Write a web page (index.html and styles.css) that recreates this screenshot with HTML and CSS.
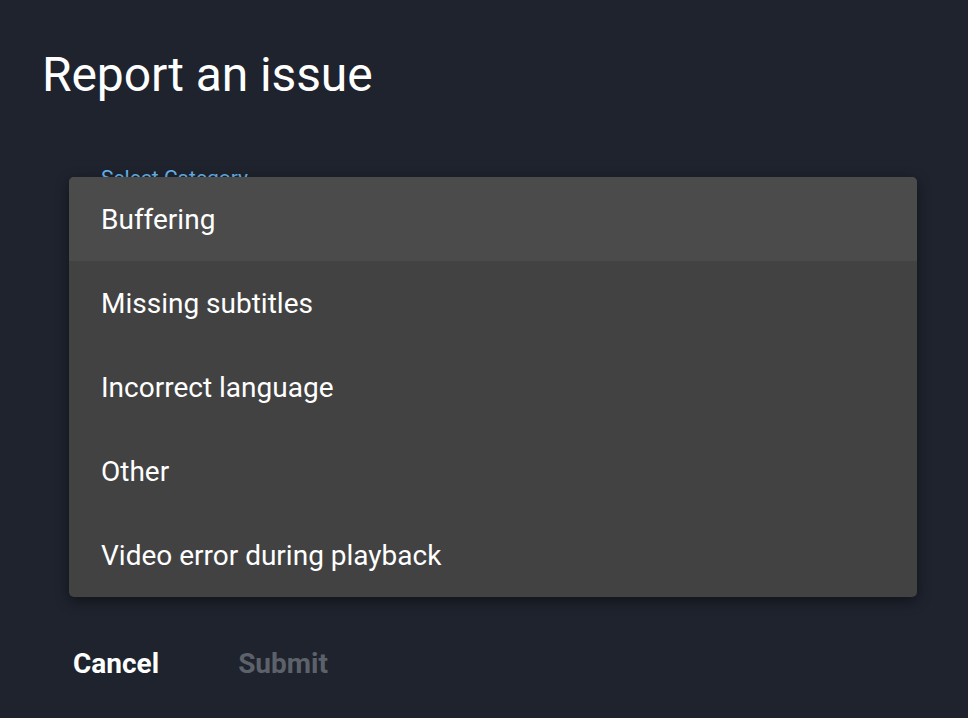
FILE: index.html
```html
<!DOCTYPE html>
<html lang="en">
<head>
  <meta charset="UTF-8">
  <meta name="viewport" content="width=device-width, initial-scale=1.0">
  <title>Report an issue</title>
  <link rel="stylesheet" href="styles.css">
</head>
<body>
  <div class="dialog">
    <h1>Report an issue</h1>
    <div class="field">
      <label for="category">Select Category</label>
      <div class="select" id="category"></div>
      <ul class="menu">
        <li class="active">Buffering</li>
        <li>Missing subtitles</li>
        <li>Incorrect language</li>
        <li>Other</li>
        <li>Video error during playback</li>
      </ul>
    </div>
    <div class="actions">
      <button class="btn">Cancel</button>
      <button class="btn" disabled>Submit</button>
    </div>
  </div>
</body>
</html>
```

FILE: styles.css
```css
body {
  font-family: Roboto, 'Liberation Sans', sans-serif;
  background: #1e232e;
  color: #ffffff;
  margin: 0;
  height: 100vh;
  overflow: hidden;
}

.dialog {
  padding: 47px 42px 0;
}

h1 {
  margin: 0;
  font-size: 48px;
  line-height: 56px;
  font-weight: 400;
  letter-spacing: -0.1px;
}

.field {
  position: relative;
  margin: 63px 0 0 59px;
}

.field label {
  display: block;
  font-size: 21px;
  line-height: 24px;
  color: #68b6ec;
}

.select {
  height: 56px;
}

.menu {
  position: absolute;
  top: 11px;
  left: -32px;
  width: 848px;
  margin: 0;
  padding: 0;
  list-style: none;
  background: #424242;
  border-radius: 5px;
  overflow: hidden;
  box-shadow: 0 4px 14px rgba(0, 0, 0, 0.45);
}

.menu li {
  height: 83px;
  line-height: 83px;
  padding: 1px 0 0 32px;
  font-size: 28px;
  color: #ffffff;
}

.menu li.active {
  background: #4b4b4b;
}

.actions {
  display: flex;
  gap: 79px;
  margin-top: 401px;
  padding-left: 31px;
}

.btn {
  font-family: inherit;
  font-size: 28px;
  font-weight: 700;
  line-height: 34px;
  padding: 0;
  border: none;
  background: none;
  color: #ffffff;
  cursor: pointer;
}

.btn:disabled {
  color: #5d616a;
  cursor: default;
}
```
